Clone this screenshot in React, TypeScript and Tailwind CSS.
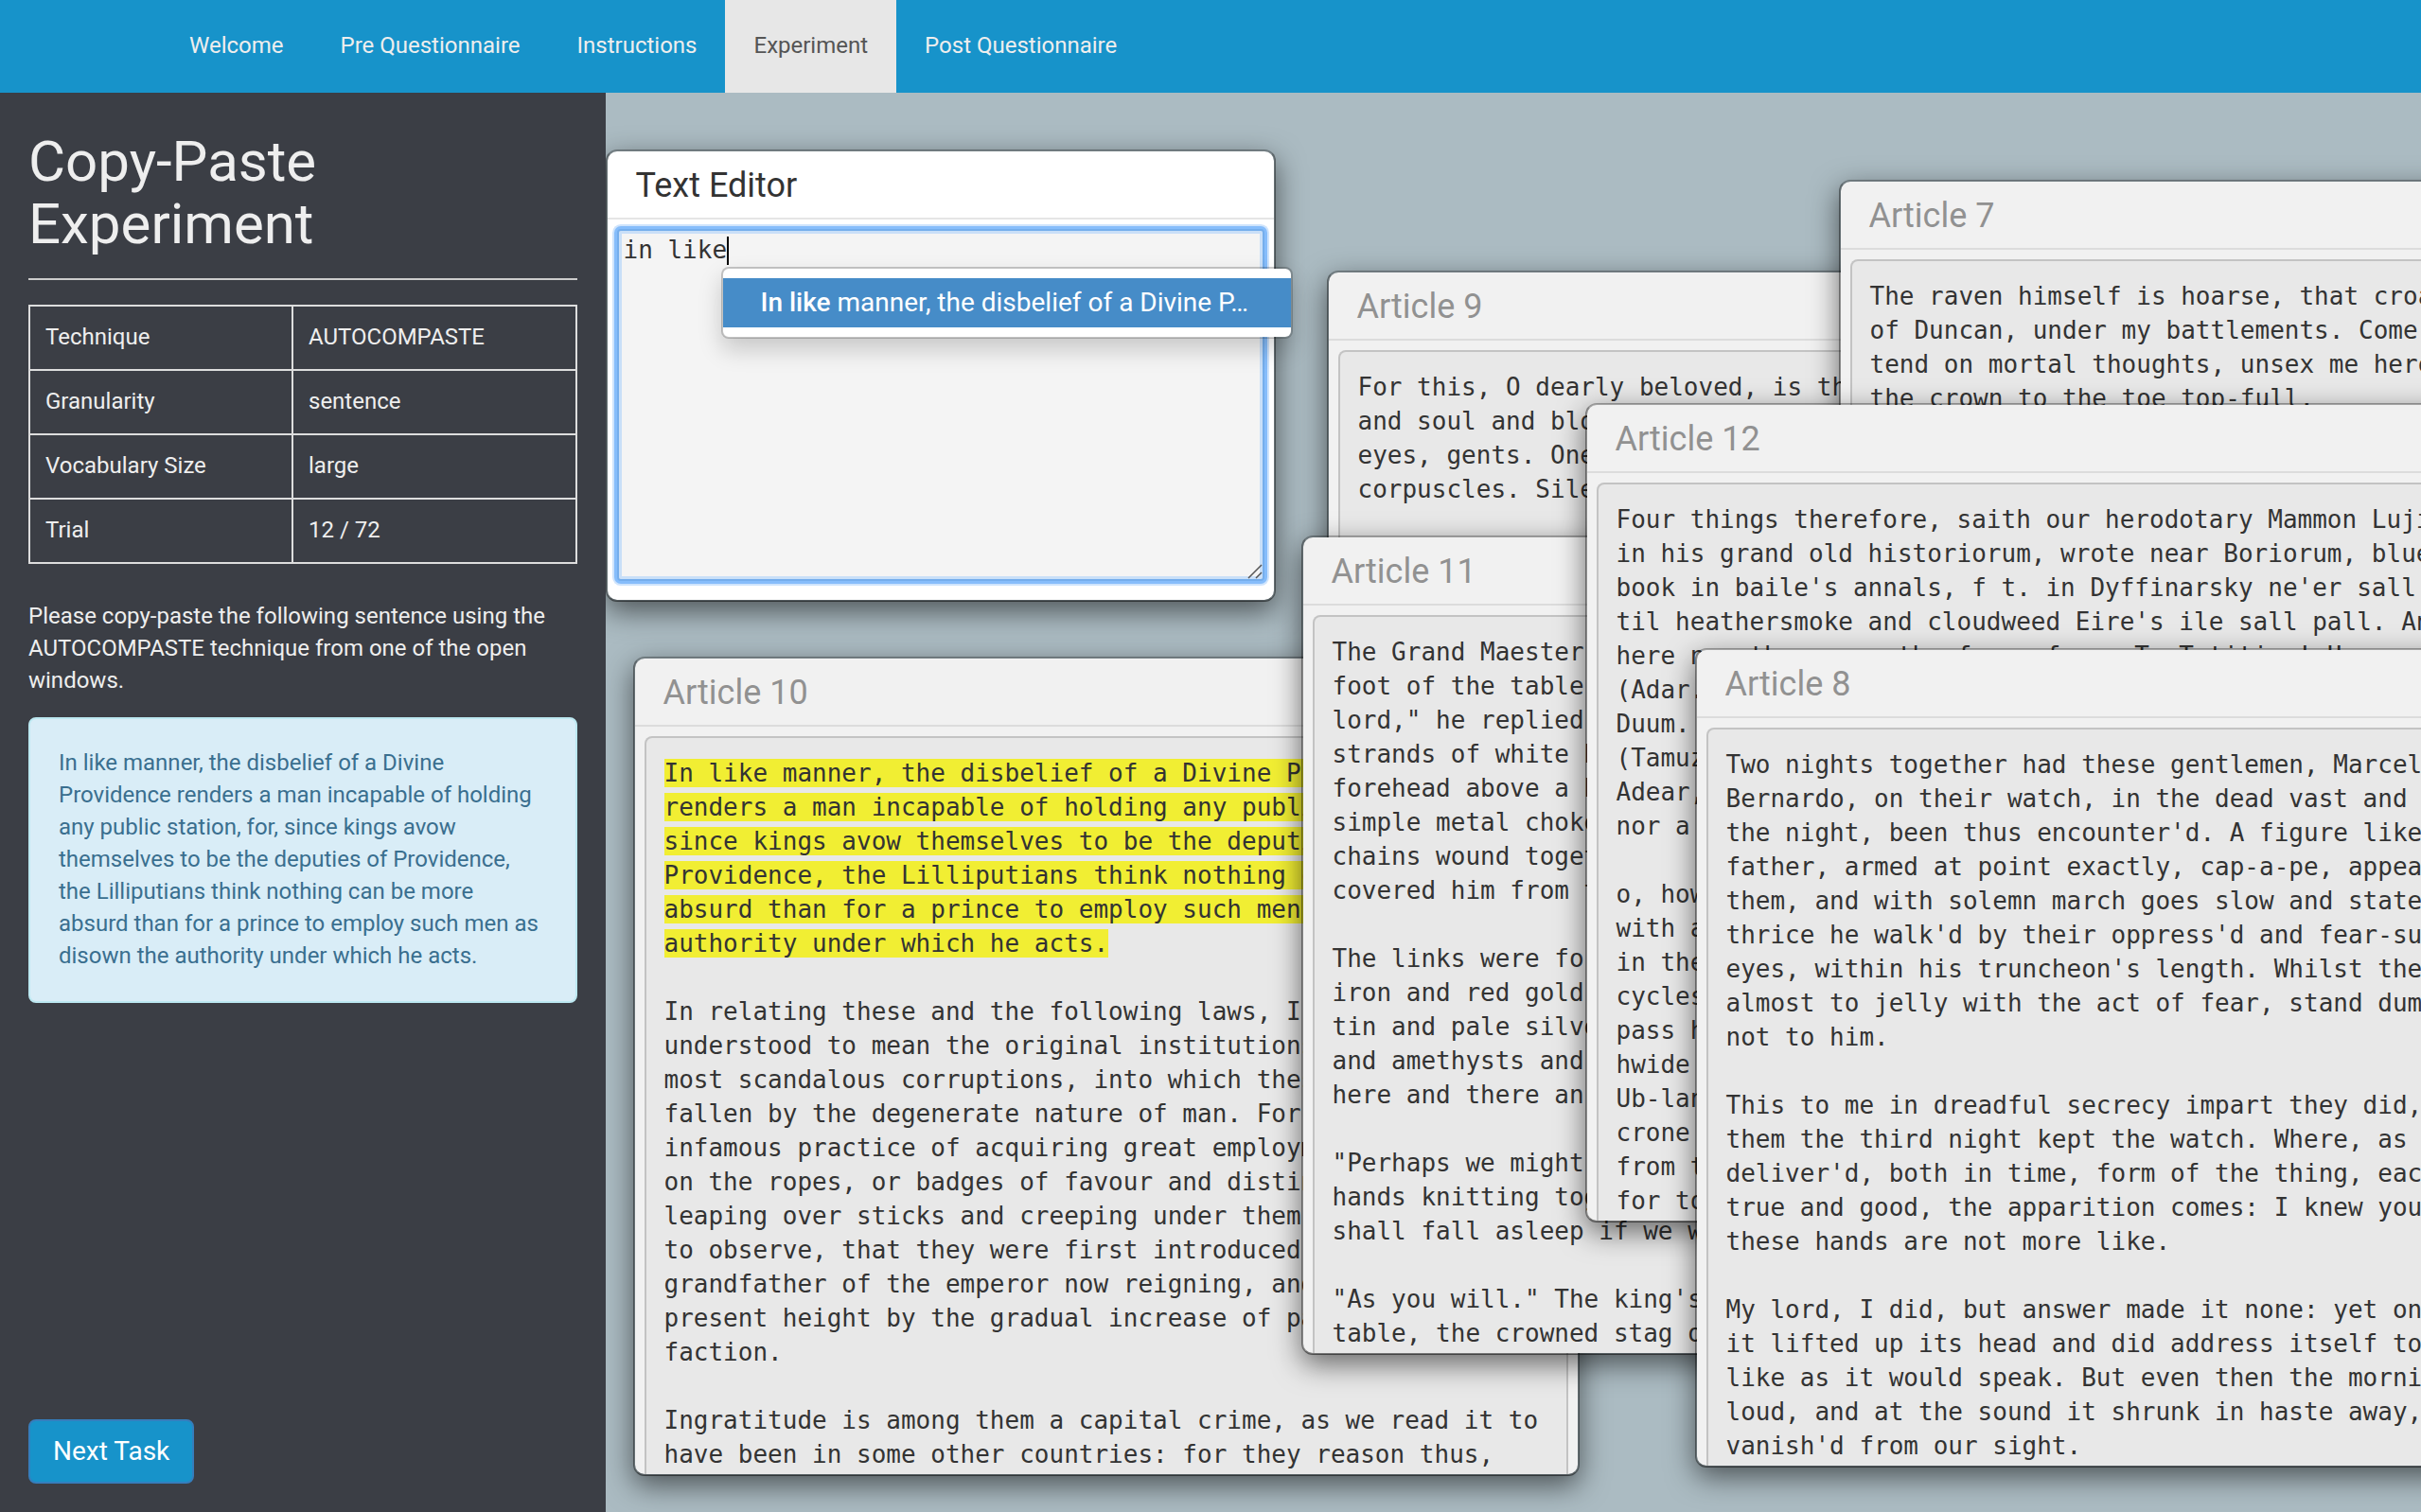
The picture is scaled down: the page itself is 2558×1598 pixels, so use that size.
const NAV = [
  { label: 'Welcome' },
  { label: 'Pre Questionnaire' },
  { label: 'Instructions' },
  { label: 'Experiment', active: true },
  { label: 'Post Questionnaire' },
];

const TRIAL_INFO = [
  ['Technique', 'AUTOCOMPASTE'],
  ['Granularity', 'sentence'],
  ['Vocabulary Size', 'large'],
  ['Trial', '12 / 72'],
];

const TARGET_SENTENCE =
  'In like manner, the disbelief of a Divine Providence renders a man incapable of holding any public station, for, since kings avow themselves to be the deputies of Providence, the Lilliputians think nothing can be more absurd than for a prince to employ such men as disown the authority under which he acts.';

const ARTICLE_10_HIGHLIGHT = `In like manner, the disbelief of a Divine Providence
renders a man incapable of holding any public station, for,
since kings avow themselves to be the deputies of
Providence, the Lilliputians think nothing can be more
absurd than for a prince to employ such men as disown the
authority under which he acts.`;

const ARTICLE_10 = `

In relating these and the following laws, I would only be
understood to mean the original institutions, and not the
most scandalous corruptions, into which these people are
fallen by the degenerate nature of man. For, as to that
infamous practice of acquiring great employments by dancing
on the ropes, or badges of favour and distinction by
leaping over sticks and creeping under them, the reader is
to observe, that they were first introduced by the
grandfather of the emperor now reigning, and grew to the
present height by the gradual increase of party and
faction.

Ingratitude is among them a capital crime, as we read it to
have been in some other countries: for they reason thus,`;

const ARTICLE_9 = `For this, O dearly beloved, is the genuine Christine: body
and soul and blood and ouns. Slow music, please. Shut your
eyes, gents. One moment. A little trouble about those white
corpuscles. Silence, all.`;

const ARTICLE_7 = `The raven himself is hoarse, that croaks the fatal entrance
of Duncan, under my battlements. Come, you spirits that
tend on mortal thoughts, unsex me here, and fill me from
the crown to the toe top-full.`;

const ARTICLE_11 = `The Grand Maester was seated at the
foot of the table. "Certainly, my
lord," he replied. He brushed the
strands of white hair from his broad
forehead above a heavy collar. No
simple metal choker, but two dozen
chains wound together, and they
covered him from throat to breast.

The links were forged of every metal,
iron and red gold, bright copper,
tin and pale silver, garnets
and amethysts and black pearls
here and there an emerald or ruby.

"Perhaps we might begin soon," his
hands knitting together, "I fear I
shall fall asleep if we wait longer."

"As you will." The king's seat stood at the head of the
table, the crowned stag of Baratheon on its back.`;

const ARTICLE_12 = `Four things therefore, saith our herodotary Mammon Lujius
in his grand old historiorum, wrote near Boriorum, bluest
book in baile's annals, f t. in Dyffinarsky ne'er sall fail
til heathersmoke and cloudweed Eire's ile sall pall. And
here now they are, the fear of um. T. Totities! Unum.
(Adar.) A bulbenboss
Duum. (Nizam.) A shoe
(Tamuz.) An auburn
Adear, adear! Quodlibus
nor a day older.

o, how it did fall
with a bockalips
in the tides of
cycles and the
pass how it
hwide was
Ub-lanium
crone that
from the
for to be`;

const ARTICLE_8 = `Two nights together had these gentlemen, Marcellus and
Bernardo, on their watch, in the dead vast and middle of
the night, been thus encounter'd. A figure like your
father, armed at point exactly, cap-a-pe, appears before
them, and with solemn march goes slow and stately by them:
thrice he walk'd by their oppress'd and fear-surprised
eyes, within his truncheon's length. Whilst they, distilled
almost to jelly with the act of fear, stand dumb and speak
not to him.

This to me in dreadful secrecy impart they did, and I with
them the third night kept the watch. Where, as they had
deliver'd, both in time, form of the thing, each word made
true and good, the apparition comes: I knew your father,
these hands are not more like.

My lord, I did, but answer made it none: yet once methought
it lifted up its head and did address itself to motion,
like as it would speak. But even then the morning cock crew
loud, and at the sound it shrunk in haste away, and
vanish'd from our sight.`;

interface ArticleProps {
  title: string;
  place: string;
  highlight?: string;
  text: string;
}

function Article({ title, place, highlight, text }: ArticleProps) {
  return (
    <section
      className={`absolute flex h-[866px] w-[1000px] flex-col overflow-hidden rounded-xl border-2 border-x-black/40 border-t-black/30 border-b-black/50 bg-[#f1f1f1] bg-clip-padding shadow-[0_10px_30px_rgba(0,0,0,0.55)] ${place}`}
    >
      <h2 className="h-[72px] shrink-0 border-b-2 border-[#dcdcdc] px-[30px] text-[36px] leading-[72px] text-[#919191]">
        {title}
      </h2>
      <pre className="mx-2.5 mt-2.5 min-h-0 grow overflow-hidden rounded-t-lg border-2 border-b-0 border-[#c3c3c3] bg-[#e8e8e8] p-[19px] font-['DejaVu_Sans_Mono',monospace] text-[26px] leading-[36px] text-[#333]">
        {highlight && <mark className="bg-[#f1ee33] text-inherit">{highlight}</mark>}
        {text}
      </pre>
    </section>
  );
}

function TextEditor() {
  return (
    <section className="absolute top-[60px] left-0 w-[708px] rounded-xl border-2 border-x-black/40 border-t-black/30 border-b-black/50 bg-white bg-clip-padding shadow-[0_10px_30px_rgba(0,0,0,0.55)]">
      <h2 className="h-[72px] border-b-2 border-[#e5e5e5] px-[30px] text-[36px] leading-[72px] text-[#333]">
        <label htmlFor="editor">Text Editor</label>
      </h2>
      <div className="relative px-2.5 pt-2.5 pb-5">
        <textarea
          id="editor"
          defaultValue="in like"
          spellCheck={false}
          className="block h-[372px] w-full resize-none rounded-sm border-2 border-[#75aeec] bg-[#f4f4f4] p-[5px] font-['DejaVu_Sans_Mono',monospace] text-[26px] leading-[30px] text-[#333] shadow-[0_0_0_3px_#86bdfb,0_0_0_5px_#cfe4fc,inset_0_0_0_3px_#c9dff8] outline-none"
        />
        <span className="absolute top-[18px] left-[126px] h-[30px] w-0.5 bg-black" />
        <svg
          className="absolute right-3 bottom-[22px] size-4"
          viewBox="0 0 16 16"
          fill="none"
          stroke="#555"
          strokeWidth="1.5"
          aria-hidden="true"
        >
          <path d="M1 15 15 1M9 15l6-6" />
        </svg>
        <ul
          role="listbox"
          aria-label="Suggestions"
          className="absolute top-[50px] left-[120px] w-[604px] rounded-lg border-2 border-black/20 bg-white bg-clip-padding py-2.5 shadow-[0_12px_24px_rgba(0,0,0,0.175)]"
        >
          <li role="option" aria-selected="true">
            <button className="block h-[52px] w-full bg-[#468cc8] pl-10 text-left text-[28px] whitespace-nowrap text-white">
              <strong className="font-medium">In</strong> <strong className="font-medium">like</strong> manner, the
              disbelief of a Divine P…
            </button>
          </li>
        </ul>
      </div>
    </section>
  );
}

export default function App() {
  return (
    <div className="flex h-screen flex-col overflow-hidden font-[Roboto,sans-serif] text-[24px] leading-[34px]">
      <nav className="flex shrink-0 bg-[#1793ca] pl-[170px]">
        {NAV.map((item) => (
          <a
            key={item.label}
            href="#"
            className={`px-[30px] pt-[31px] pb-[33px] ${item.active ? 'bg-[#e7e7e7] text-[#555]' : 'text-[#eee]'}`}
          >
            {item.label}
          </a>
        ))}
      </nav>

      <div className="flex min-h-0 grow">
        <aside className="flex w-1/4 shrink-0 flex-col bg-[#3b3e45] px-[30px] pt-10 pb-[30px] text-[#eee]">
          <h1 className="text-[60px] leading-[66px]">Copy-Paste Experiment</h1>
          <hr className="mt-6 mb-[26px] border-t-2 border-[#ccc]" />
          <table className="w-full border-collapse border-2 border-[#ddd]">
            <tbody>
              {TRIAL_INFO.map(([name, value]) => (
                <tr key={name}>
                  <th scope="row" className="w-[278px] border-2 border-[#ddd] px-4 pt-[15px] pb-[17px] text-left font-normal">
                    {name}
                  </th>
                  <td className="border-2 border-[#ddd] px-4 pt-[15px] pb-[17px]">{value}</td>
                </tr>
              ))}
            </tbody>
          </table>
          <p className="mt-[38px]">
            Please copy-paste the following sentence using the AUTOCOMPASTE technique from one of the open windows.
          </p>
          <div className="mt-[22px] rounded-lg border-2 border-[#bce8f1] bg-[#d9edf7] px-[30px] pt-[29px] pb-[31px] text-[#3a6f8f]">
            {TARGET_SENTENCE}
          </div>
          <button className="mt-auto h-[68px] self-start rounded-lg border-2 border-[#357ebd] bg-[#1793ca] px-6 text-[28px] text-white">
            Next Task
          </button>
        </aside>

        <main className="relative grow overflow-hidden bg-[#abbbc2]">
          <Article title="Article 10" place="top-[596px] left-[29px]" highlight={ARTICLE_10_HIGHLIGHT} text={ARTICLE_10} />
          <Article title="Article 9" place="top-[188px] left-[762px]" text={ARTICLE_9} />
          <Article title="Article 7" place="top-[92px] left-[1303px]" text={ARTICLE_7} />
          <Article title="Article 11" place="top-[468px] left-[735px]" text={ARTICLE_11} />
          <Article title="Article 12" place="top-[328px] left-[1035px]" text={ARTICLE_12} />
          <Article title="Article 8" place="top-[587px] left-[1151px]" text={ARTICLE_8} />
          <TextEditor />
        </main>
      </div>
    </div>
  );
}
